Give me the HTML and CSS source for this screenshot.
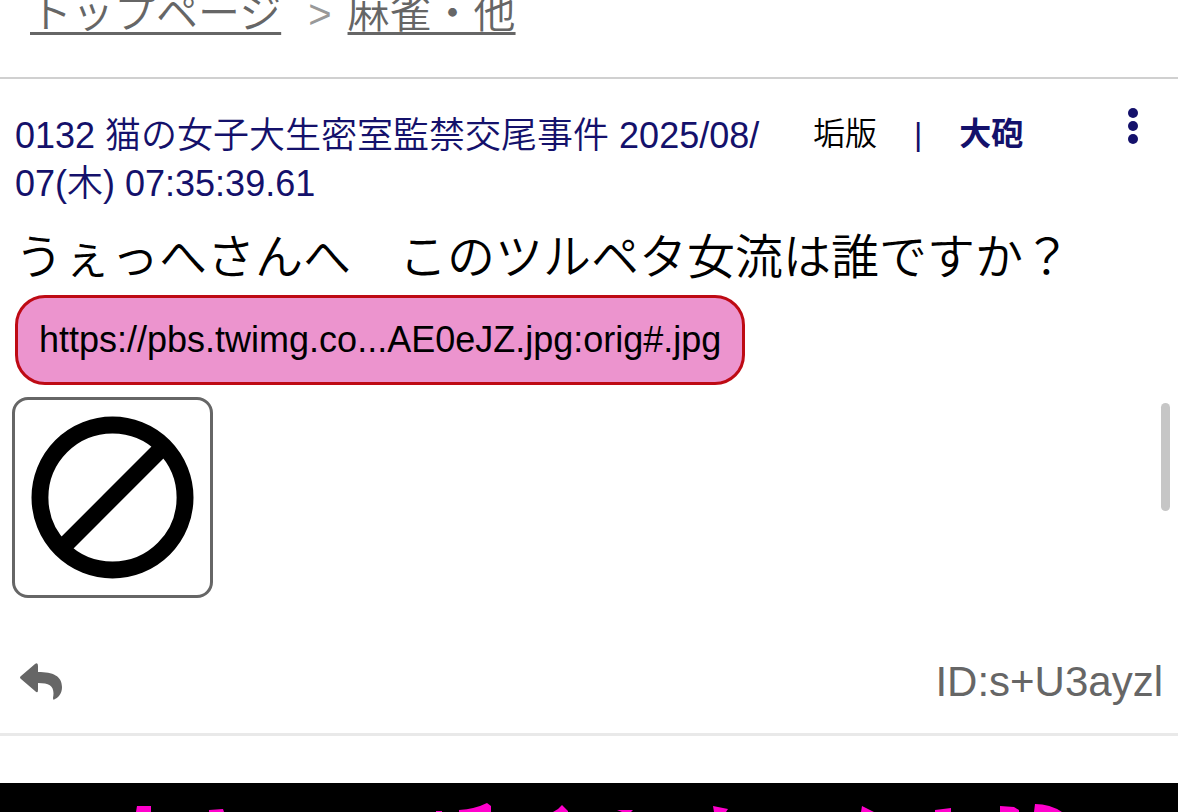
FILE: index.html
```html
<!DOCTYPE html>
<html lang="ja">
<head>
    <meta charset="UTF-8">
    <meta name="viewport" content="width=device-width, initial-scale=1.0">
    <title>麻雀・他</title>
    <link rel="stylesheet" href="styles.css">
</head>
<body>

    <nav class="breadcrumb">
        <a href="#">トップページ</a>
        <span class="separator">&gt;</span>
        <a href="#">麻雀・他</a>
    </nav>

    <main>
        <article class="post">
            <header class="post-header">
                <div class="post-title">0132 猫の女子大生密室監禁交尾事件 2025/08/<wbr>07(木) 07:35:39.61</div>
                <div class="post-tools">
                    <a href="#" class="board">垢版</a>
                    <span class="bar">|</span>
                    <a href="#" class="cannon">大砲</a>
                </div>
                <button class="menu-button" aria-label="メニュー">
                    <svg width="10" height="36" viewBox="0 0 10 36">
                        <circle cx="5" cy="5" r="5"/>
                        <circle cx="5" cy="18" r="5"/>
                        <circle cx="5" cy="31" r="5"/>
                    </svg>
                </button>
            </header>

            <p class="post-body">うぇっへさんへ　このツルペタ女流は誰ですか？</p>
            <a href="#" class="post-link">https://pbs.twimg.co...AE0eJZ.jpg:orig#.jpg</a>

            <a href="#" class="thumbnail" aria-label="画像">
                <svg width="163" height="163" viewBox="0 0 164 164">
                    <circle cx="82" cy="82" r="73"/>
                    <path d="M32 132 132 32"/>
                </svg>
            </a>

            <footer class="post-footer">
                <button class="reply-button" aria-label="返信">
                    <svg width="42" height="38" viewBox="0 0 42 38">
                        <path d="M1 13 15 1Q18-1 18 3V9C33 9 42 13 42 24C42 30 39 34 35 36Q33 38 33 35C35 24 31 20 18 20V27Q18 31 15 28L1 16Q-1 14.500 1 13Z"/>
                    </svg>
                </button>
                <a href="#" class="post-id">ID:s+U3ayzl</a>
            </footer>
        </article>
    </main>

    <div class="banner">
        <!-- top edge of the banner lettering -->
        <svg width="100%" height="29" viewBox="0 0 1178 29" preserveAspectRatio="none">
            <path d="M137 23h14v6h-15zM209 27l14-1 1 3h-15zM436 28h6v1h-6zM459 27q16-1 28-7l4 3v6h-32zM553 29q5-2 9-7l6 6v1zM617 27h16l-2 2h-9zM713 23l15 3-2 3h-12zM862 23l12 6h-13zM935 27l16-2v4h-16zM1000 23l14 1 5 3v2h-19zM1035 21q15 0 27 8h-28z"/>
        </svg>
    </div>

    <div class="scroll-thumb"></div>

</body>
</html>
```
FILE: styles.css
```css
body {
    margin: 0;
    height: 100vh;
    overflow: hidden;
    display: flex;
    flex-direction: column;
    background-color: #fff;
    color: #000;
    font-family: "Liberation Sans", "Noto Sans CJK JP", sans-serif;
    font-weight: 350;
}

a {
    text-decoration: none;
    color: inherit;
}

button {
    background: none;
    border: none;
    padding: 0;
    cursor: pointer;
}

svg {
    display: block;
}

/* Breadcrumb */
.breadcrumb {
    display: flex;
    align-items: flex-end;
    flex-shrink: 0;
    box-sizing: border-box;
    height: 79px;
    padding: 0 30px 35px;
    border-bottom: 2px solid #d0d0d0;
    font-size: 42px;
    line-height: 56px;
    color: #666;
}

.breadcrumb a {
    text-decoration: underline;
    text-decoration-thickness: 3px;
    text-underline-offset: 4px;
    text-decoration-skip-ink: none;
}

.breadcrumb .separator {
    margin: 0 16px 0 27px;
    font-size: 40px;
    color: #999;
}

/* Post */
.post {
    display: flex;
    flex-direction: column;
    align-items: flex-start;
    padding: 29px 15px 24px;
    border-bottom: 3px solid #e9e9e9;
}

.post-header {
    display: flex;
    align-items: flex-start;
    width: 100%;
    color: #14116b;
}

.post-title {
    width: 798px;
    padding-top: 4px;
    font-size: 36px;
    line-height: 48px;
}

.post-tools {
    display: flex;
    flex: 1;
    gap: 37px;
    padding-top: 2px;
    font-size: 32px;
    line-height: 48px;
}

.board {
    color: #000;
}

.cannon {
    font-weight: bold;
}

.menu-button {
    padding: 0 25px 0 0;
}

.menu-button svg {
    fill: #14116b;
}

.post-body {
    margin: 14px 0 1px;
    font-size: 48px;
    line-height: 72px;
}

.post-link {
    padding: 18px 21px;
    border: 3px solid #be0a14;
    border-radius: 30px;
    background-color: #ec94ce;
    font-size: 36px;
    line-height: 48px;
}

.thumbnail {
    margin: 12px 0 0 -3px;
    padding: 16px;
    border: 3px solid #666;
    border-radius: 16px;
}

.thumbnail svg {
    fill: none;
    stroke: #000;
    stroke-width: 17;
}

.post-footer {
    display: flex;
    justify-content: space-between;
    align-items: center;
    width: 100%;
    margin-top: 57px;
    color: #666;
}

.reply-button {
    margin-left: 5px;
}

.reply-button svg {
    fill: #666;
}

.post-id {
    font-size: 42px;
    line-height: 54px;
}

/* Banner */
.banner {
    flex: 1;
    margin-top: 47px;
    background-color: #000;
}

.banner svg {
    fill: #f0c;
}

.scroll-thumb {
    position: absolute;
    top: 403px;
    right: 8px;
    width: 9px;
    height: 108px;
    border-radius: 5px;
    background-color: #c6c6c6;
}
```
